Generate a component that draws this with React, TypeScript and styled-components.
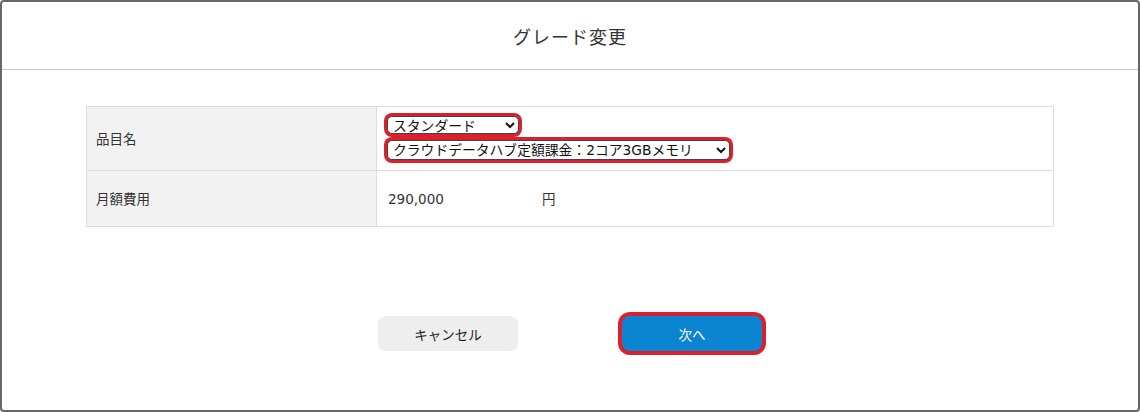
import React from 'react'
import styled, { createGlobalStyle } from 'styled-components'

const GlobalStyle = createGlobalStyle`
  html, body {
    margin: 0;
    padding: 0;
    background: #ffffff;
  }
  body {
    font-family: "DejaVu Sans", "Noto Sans CJK JP", sans-serif;
    color: #333333;
  }
`

const Modal = styled.div({
  boxSizing: 'border-box',
  width: '1140px',
  height: '412px',
  border: '2px solid #676767',
  borderRadius: '4px',
  background: '#ffffff',
  display: 'flex',
  flexDirection: 'column',
})

const Header = styled.header({
  height: '67px',
  borderBottom: '1px solid #c8c8c8',
  display: 'flex',
  alignItems: 'center',
  justifyContent: 'center',
})

const Title = styled.h1({
  margin: 0,
  fontFamily: '"Noto Sans CJK JP", sans-serif',
  fontSize: '18px',
  fontWeight: 400,
  letterSpacing: '1px',
  color: '#333333',
})

const Body = styled.main({
  flex: 1,
  display: 'flex',
  flexDirection: 'column',
  alignItems: 'center',
  paddingTop: '36px',
})

const Table = styled.table({
  width: '968px',
  borderCollapse: 'collapse',
  fontSize: '13.5px',
  lineHeight: '18px',
})

const Row = styled.tr<{ $height: number }>`
  height: ${(p) => p.$height}px;
`

const Label = styled.th({
  width: '290px',
  boxSizing: 'border-box',
  background: '#f2f2f2',
  border: '1px solid #dddddd',
  textAlign: 'left',
  fontWeight: 400,
  padding: '0 9px',
  color: '#333333',
})

const Cell = styled.td({
  border: '1px solid #dddddd',
  padding: '0 10px',
  verticalAlign: 'middle',
})

const SelectStack = styled.div({
  display: 'flex',
  flexDirection: 'column',
  alignItems: 'flex-start',
  gap: '6px',
  marginTop: '-1px',
})

const Select = styled.select<{ $width: number; $height: number }>`
  width: ${(p) => p.$width}px;
  height: ${(p) => p.$height}px;
  box-sizing: border-box;
  font-family: "DejaVu Sans", "Noto Sans CJK JP", sans-serif;
  font-size: 13.8px;
  line-height: 16px;
  color: #111111;
  background: #ffffff;
  border: 1px solid #444444;
  border-radius: 5px;
  padding: 0 1px;
  box-shadow: 0 0 0 3px #dc1f2b;
  outline: none;
`

const Price = styled.span({
  display: 'inline-block',
  width: '154px',
  marginLeft: '1px',
})

const Unit = styled.span({
  fontFamily: '"Noto Sans CJK JP", sans-serif',
})

const Actions = styled.div({
  marginTop: '89px',
  display: 'flex',
  gap: '104px',
})

const Button = styled.button<{ $primary?: boolean }>`
  width: 140px;
  height: 35px;
  border: none;
  border-radius: 8px;
  font-family: "Noto Sans CJK JP", sans-serif;
  font-size: 13.5px;
  cursor: pointer;
  background: ${(p) => (p.$primary ? '#0b85d1' : '#eeeeee')};
  color: ${(p) => (p.$primary ? '#ffffff' : '#222222')};
  box-shadow: ${(p) => (p.$primary ? '0 0 0 4px #dc1f2b' : 'none')};
`

export default function App() {
  return (
    <>
      <GlobalStyle />
      <Modal>
        <Header>
          <Title>グレード変更</Title>
        </Header>
        <Body>
          <Table>
            <tbody>
              <Row $height={64}>
                <Label>品目名</Label>
                <Cell>
                  <SelectStack>
                    <Select $width={132} $height={18} defaultValue="standard">
                      <option value="standard">スタンダード</option>
                    </Select>
                    <Select $width={343} $height={20} defaultValue="2core">
                      <option value="2core">クラウドデータハブ定額課金：2コア3GBメモリ</option>
                    </Select>
                  </SelectStack>
                </Cell>
              </Row>
              <Row $height={56}>
                <Label>月額費用</Label>
                <Cell>
                  <Price>290,000</Price>
                  <Unit>円</Unit>
                </Cell>
              </Row>
            </tbody>
          </Table>
          <Actions>
            <Button>キャンセル</Button>
            <Button $primary>次へ</Button>
          </Actions>
        </Body>
      </Modal>
    </>
  )
}
